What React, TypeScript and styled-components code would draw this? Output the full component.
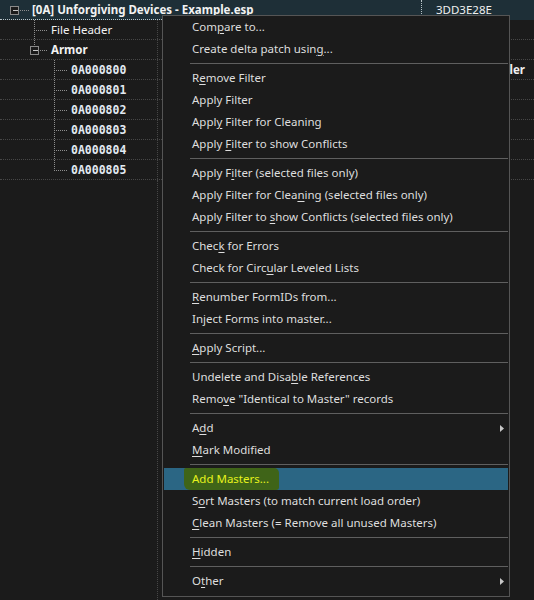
import React from 'react';
import styled, { createGlobalStyle } from 'styled-components';

const GlobalStyle = createGlobalStyle`
  html, body { margin: 0; padding: 0; background: #1b1b1b; }
  body { width: 534px; height: 600px; overflow: hidden; font-family: "Noto Sans", "Open Sans", sans-serif; }
  * { box-sizing: border-box; }
`;

const Screen = styled.div`
  position: relative;
  width: 534px;
  height: 600px;
  overflow: hidden;
  background: #1b1b1b;
  color: #f0f0f0;
  font-size: 11.5px;
`;

const Tree = styled.div`
  display: flex;
  flex-direction: column;
  height: 100%;
`;

const Row = styled.div<{ $selected?: boolean }>`
  display: flex;
  height: 20px;
  border-bottom: 1px dotted ${(p) => (p.$selected ? 'transparent' : '#474747')};
  background: ${(p) => (p.$selected ? '#1e2f37' : 'transparent')};
  flex-shrink: 0;
`;

const FocusCell = styled.div`
  display: flex;
  align-items: center;
  width: 422px;
  height: 20px;
  border-right: 1px dotted #b8c4c8;
  border-bottom: 1px dotted #b8c4c8;
`;

const NameCell = styled.div`
  display: flex;
  align-items: center;
  width: 158px;
  border-right: 1px dotted #474747;
  white-space: nowrap;
`;

const ValueCell = styled.div<{ $align?: 'left' | 'right' }>`
  flex: 1;
  display: flex;
  align-items: center;
  justify-content: ${(p) => (p.$align === 'right' ? 'flex-end' : 'flex-start')};
  padding: ${(p) => (p.$align === 'right' ? '0 9px 0 0' : '0 0 0 14px')};
  white-space: nowrap;
  overflow: hidden;
`;

const Label = styled.span<{ $bold?: boolean; $mono?: boolean }>`
  margin-left: 3px;
  font-family: ${(p) => (p.$mono ? '"DejaVu Sans Mono", monospace' : '"Noto Sans", sans-serif')};
  font-size: 11.5px;
  font-weight: ${(p) => (p.$bold ? 700 : 400)};
  color: ${(p) => (p.$mono ? '#e2eaf2' : '#f2f2f2')};
  line-height: 20px;
`;

const PlainText = styled.span<{ $bold?: boolean }>`
  font-weight: ${(p) => (p.$bold ? 700 : 400)};
  color: #f0f0f0;
`;

const Filler = styled.div`
  flex: 1;
  display: flex;
`;

const FillerColumn = styled.div`
  width: 158px;
  border-right: 1px dotted #474747;
`;

const Menu = styled.div`
  position: absolute;
  left: 162px;
  top: 15px;
  width: 348px;
  background: #1b1b1b;
  border: 1px solid #555;
  padding: 0 1px 4px 1px;
  display: flex;
  flex-direction: column;
  font-family: "Noto Sans", sans-serif;
  font-size: 11.5px;
  color: #dedede;
`;

const Item = styled.div<{ $active?: boolean }>`
  height: 22px;
  display: flex;
  align-items: center;
  justify-content: space-between;
  padding-left: 28px;
  padding-right: 4px;
  background: ${(p) => (p.$active ? '#2b6684' : 'transparent')};
  white-space: nowrap;
`;

const ItemText = styled.span`
  line-height: 22px;
  padding-bottom: 1px;
  u {
    text-decoration: underline;
    text-decoration-thickness: 1px;
    text-underline-offset: 2px;
  }
`;

const Marker = styled.span`
  margin-left: -8px;
  padding: 0 10px 1px 8px;
  height: 22px;
  line-height: 22px;
  background: #3f6418;
  color: #e6f31c;
  border-radius: 2px 5px 3px 6px;
`;

const Separator = styled.div`
  height: 7px;
  display: flex;
  align-items: center;
  padding-left: 26px;
  &::after {
    content: '';
    flex: 1;
    height: 1px;
    background: #5f5f5f;
  }
`;

const Arrow = styled.svg`
  width: 4px;
  height: 7px;
  flex-shrink: 0;
`;

type Entry = { label: string; submenu?: boolean; active?: boolean } | 'sep';

const entries: Entry[] = [
  { label: 'Com&pare to...' },
  { label: 'Create delta patch usin&g...' },
  'sep',
  { label: 'R&emove Filter' },
  { label: 'Apply Filter' },
  { label: 'Appl&y Filter for Cleaning' },
  { label: 'Apply &Filter to show Conflicts' },
  'sep',
  { label: 'Apply F&ilter (selected files only)' },
  { label: 'Apply Filter for Clea&ning (selected files only)' },
  { label: 'Apply Filter to &show Conflicts (selected files only)' },
  'sep',
  { label: 'Chec&k for Errors' },
  { label: 'Check for Circ&ular Leveled Lists' },
  'sep',
  { label: '&Renumber FormIDs from...' },
  { label: 'Inject Forms into master...' },
  'sep',
  { label: '&Apply Script...' },
  'sep',
  { label: 'Undelete and Disa&ble References' },
  { label: 'Remo&ve "Identical to Master" records' },
  'sep',
  { label: 'A&dd', submenu: true },
  { label: '&Mark Modified' },
  'sep',
  { label: 'Add Masters...', active: true },
  { label: 'S&ort Masters (to match current load order)' },
  { label: '&Clean Masters (= Remove all unused Masters)' },
  'sep',
  { label: '&Hidden' },
  'sep',
  { label: 'O&ther', submenu: true },
];

function renderLabel(label: string) {
  const i = label.indexOf('&');
  if (i < 0) return label;
  return (
    <>
      {label.slice(0, i)}
      <u>{label[i + 1]}</u>
      {label.slice(i + 2)}
    </>
  );
}

const DOT = '1 1';
const LINE = '#8e8e8e';

function ExpandBox({ cx }: { cx: number }) {
  return (
    <>
      <rect x={cx - 4.5} y={6.5} width={8} height={8} fill="#1b1b1b" stroke="#8a8a8a" />
      <line x1={cx - 2} y1={10.5} x2={cx + 3} y2={10.5} stroke="#c8c8c8" />
    </>
  );
}

type Gutter = 'root' | 'file' | 'armor' | 'child' | 'lastChild';

function TreeGutter({ kind }: { kind: Gutter }) {
  const width = kind === 'root' ? 29 : kind === 'file' || kind === 'armor' ? 48 : 68;
  return (
    <svg width={width} height={20} style={{ flexShrink: 0 }} shapeRendering="crispEdges">
      {kind === 'root' && (
        <>
          <line x1={20} y1={10.5} x2={29} y2={10.5} stroke={LINE} strokeDasharray={DOT} />
          <ExpandBox cx={15} />
        </>
      )}
      {kind === 'file' && (
        <>
          <line x1={34.5} y1={0} x2={34.5} y2={20} stroke={LINE} strokeDasharray={DOT} />
          <line x1={36} y1={10.5} x2={48} y2={10.5} stroke={LINE} strokeDasharray={DOT} />
        </>
      )}
      {kind === 'armor' && (
        <>
          <line x1={34.5} y1={0} x2={34.5} y2={6} stroke={LINE} strokeDasharray={DOT} />
          <line x1={40} y1={10.5} x2={48} y2={10.5} stroke={LINE} strokeDasharray={DOT} />
          <ExpandBox cx={35} />
        </>
      )}
      {(kind === 'child' || kind === 'lastChild') && (
        <>
          <line
            x1={54.5}
            y1={0}
            x2={54.5}
            y2={kind === 'lastChild' ? 11 : 20}
            stroke={LINE}
            strokeDasharray={DOT}
          />
          <line x1={56} y1={10.5} x2={68} y2={10.5} stroke={LINE} strokeDasharray={DOT} />
        </>
      )}
    </svg>
  );
}

const ids = ['0A000800', '0A000801', '0A000802', '0A000803', '0A000804', '0A000805'];

export default function App() {
  return (
    <>
      <GlobalStyle />
      <Screen>
        <Tree>
          <Row $selected>
            <FocusCell>
              <TreeGutter kind="root" />
              <Label $bold>[0A] Unforgiving Devices - Example.esp</Label>
            </FocusCell>
            <ValueCell>
              <PlainText>3DD3E28E</PlainText>
            </ValueCell>
          </Row>
          <Row>
            <NameCell>
              <TreeGutter kind="file" />
              <Label>File Header</Label>
            </NameCell>
            <ValueCell />
          </Row>
          <Row>
            <NameCell>
              <TreeGutter kind="armor" />
              <Label $bold>Armor</Label>
            </NameCell>
            <ValueCell />
          </Row>
          {ids.map((id, i) => (
            <Row key={id}>
              <NameCell>
                <TreeGutter kind={i === ids.length - 1 ? 'lastChild' : 'child'} />
                <Label $mono $bold>
                  {id}
                </Label>
              </NameCell>
              <ValueCell $align="right">{i === 0 && <PlainText $bold>Handler</PlainText>}</ValueCell>
            </Row>
          ))}
          <Filler>
            <FillerColumn />
          </Filler>
        </Tree>
        <Menu>
          {entries.map((e, i) =>
            e === 'sep' ? (
              <Separator key={i} />
            ) : (
              <Item key={i} $active={e.active}>
                {e.active ? (
                  <Marker>{renderLabel(e.label)}</Marker>
                ) : (
                  <ItemText>{renderLabel(e.label)}</ItemText>
                )}
                {e.submenu && (
                  <Arrow viewBox="0 0 4 7">
                    <path d="M0 0 L4 3.5 L0 7 Z" fill="#c8c8c8" />
                  </Arrow>
                )}
              </Item>
            )
          )}
        </Menu>
      </Screen>
    </>
  );
}
